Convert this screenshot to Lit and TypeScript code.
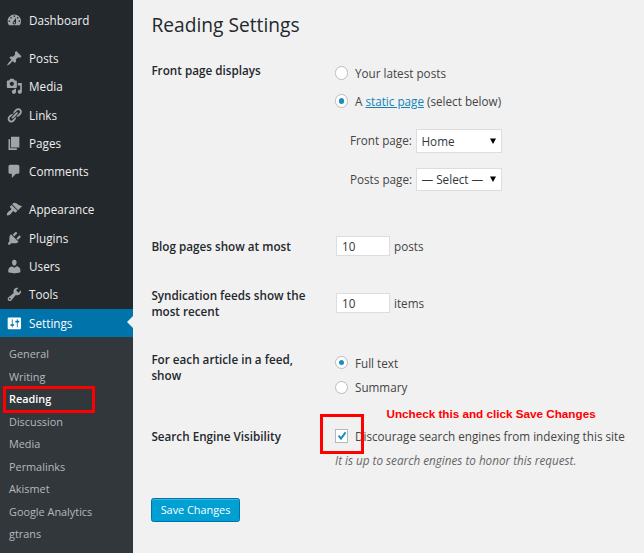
import { LitElement, html, css, svg } from "lit";
import { customElement, property } from "lit/decorators.js";
import { classMap } from "lit/directives/class-map.js";

const ICONS: Record<string, string> = {
  dashboard:
    "M3.76 16h12.48c1.1-1.37 1.76-3.11 1.76-5 0-4.42-3.58-8-8-8s-8 3.58-8 8c0 1.89.66 3.63 1.76 5zM10 4c.55 0 1 .45 1 1s-.45 1-1 1-1-.45-1-1 .45-1 1-1zM6 6c.55 0 1 .45 1 1s-.45 1-1 1-1-.45-1-1 .45-1 1-1zm8 0c.55 0 1 .45 1 1s-.45 1-1 1-1-.45-1-1 .45-1 1-1zm-5.37 5.55L12 7v6c0 1.1-.9 2-2 2s-2-.9-2-2c0-.57.24-1.08.63-1.45zM4 10c.55 0 1 .45 1 1s-.45 1-1 1-1-.45-1-1 .45-1 1-1zm12 0c.55 0 1 .45 1 1s-.45 1-1 1-1-.45-1-1 .45-1 1-1zm-5 3c0-.55-.45-1-1-1s-1 .45-1 1 .45 1 1 1 1-.45 1-1z",
  posts:
    "M10.44 3.02l1.82-1.82 6.36 6.35-1.83 1.82c-1.05-.68-2.48-.57-3.41.36l-.75.75c-.92.93-1.04 2.35-.35 3.41l-1.83 1.82-2.41-2.41-2.8 2.79c-.42.42-3.38 2.71-3.8 2.29s1.86-3.39 2.28-3.81l2.79-2.79L4.1 9.36l1.83-1.82c1.05.69 2.48.57 3.4-.36l.75-.75c.93-.92 1.05-2.35.36-3.41z",
  media:
    "M13 11V4c0-.55-.45-1-1-1h-1.67L9 1H5L3.67 3H2c-.55 0-1 .45-1 1v7c0 .55.45 1 1 1h10c.55 0 1-.45 1-1zM7 4.5c1.38 0 2.5 1.12 2.5 2.5S8.38 9.5 7 9.5 4.5 8.38 4.5 7 5.62 4.5 7 4.5zM14 6h5v10.5c0 1.38-1.12 2.5-2.5 2.5S14 17.88 14 16.5s1.12-2.5 2.5-2.5c.17 0 .34.02.5.05V9h-3V6zm-4 8.05V13h2v3.5c0 1.38-1.12 2.5-2.5 2.5S7 17.88 7 16.5 8.12 14 9.5 14c.17 0 .34.02.5.05z",
  links:
    "M17.74 2.76c1.68 1.69 1.68 4.41 0 6.1l-1.53 1.52c-1.12 1.12-2.7 1.47-4.14 1.09l2.62-2.61.76-.77.76-.76c.84-.84.84-2.2 0-3.04-.84-.85-2.2-.85-3.04 0l-.77.76-3.38 3.38c-.37-1.44-.02-3.02 1.1-4.14l1.52-1.53c1.69-1.68 4.42-1.68 6.1 0zM8.59 13.43l5.34-5.34c.42-.42.42-1.1 0-1.52-.44-.43-1.13-.39-1.53 0l-5.33 5.34c-.42.42-.42 1.1 0 1.52.44.43 1.13.39 1.52 0zm-.76 2.29l4.14-4.15c.38 1.44.03 3.02-1.09 4.14l-1.52 1.53c-1.69 1.68-4.41 1.68-6.1 0-1.68-1.68-1.68-4.42 0-6.1l1.53-1.52c1.12-1.12 2.7-1.47 4.14-1.1l-4.14 4.15c-.85.84-.85 2.2 0 3.05.84.84 2.2.84 3.04 0z",
  pages: "M6 15V2h10v13H6zm-1 1h8v2H3V5h2v11z",
  comments:
    "M5 2h9c1.1 0 2 .9 2 2v7c0 1.1-.9 2-2 2h-2l-5 5v-5H5c-1.1 0-2-.9-2-2V4c0-1.1.9-2 2-2z",
  appearance:
    "M14.48 11.06L7.41 3.99l1.5-1.5c.5-.56 2.3-.47 3.51.32 1.21.8 1.43 1.28 2.91 2.1 1.18.64 2.45 1.26 4.45.85zm-.71.71L6.7 4.7 4.93 6.47c-.39.39-.39 1.02 0 1.41l1.06 1.06c.39.39.39 1.03 0 1.42-.6.6-1.43 1.11-2.21 1.69-.35.26-.7.53-1.01.84C1.43 14.23.4 16.08 1.4 17.07c.99 1 2.84-.03 4.18-1.36.31-.31.58-.66.85-1.02.57-.78 1.08-1.61 1.69-2.21.39-.39 1.02-.39 1.41 0l1.06 1.06c.39.39 1.02.39 1.41 0z",
  plugins:
    "M13.11 4.36L9.87 7.6 8 5.73l3.24-3.24c.35-.34 1.05-.2 1.56.32.52.51.66 1.21.31 1.55zm-8 1.77l.91-1.12 9.01 9.01-1.19.84c-.71.71-2.63 1.16-3.82 1.16H6.14L4.9 17.26c-.59.59-1.54.59-2.12 0-.59-.58-.59-1.53 0-2.12l1.24-1.24v-3.88c0-1.13.4-3.19 1.09-3.89zm7.26 3.97l3.24-3.24c.34-.35 1.04-.21 1.55.31.52.51.66 1.21.31 1.55l-3.24 3.25z",
  users:
    "M10 9.25c-2.27 0-2.73-3.44-2.73-3.44C7 4.02 7.82 2 9.97 2c2.16 0 2.98 2.02 2.71 3.81 0 0-.41 3.44-2.68 3.44zm0 2.57L12.72 10c2.39 0 4.52 2.33 4.52 4.53v2.49s-3.65 1.13-7.24 1.13c-3.65 0-7.24-1.13-7.24-1.13v-2.49c0-2.25 1.94-4.48 4.47-4.48z",
  tools:
    "M16.68 9.77c-1.34 1.34-3.3 1.67-4.95.99l-5.41 6.52c-.99.99-2.59.99-3.58 0s-.99-2.59 0-3.57l6.52-5.42c-.68-1.65-.35-3.61.99-4.95 1.28-1.28 3.12-1.62 4.72-1.06l-2.89 2.89 2.82 2.82 2.86-2.87c.53 1.58.18 3.39-1.08 4.65zM3.81 16.21c.4.39 1.04.39 1.43 0 .4-.4.4-1.04 0-1.43-.39-.4-1.03-.4-1.43 0-.39.39-.39 1.03 0 1.43z",
  settings:
    "M18 16V4c0-.55-.45-1-1-1H3c-.55 0-1 .45-1 1v12c0 .55.45 1 1 1h14c.55 0 1-.45 1-1zM8 11h1c.55 0 1 .45 1 1s-.45 1-1 1H8v1.5c0 .28-.22.5-.5.5s-.5-.22-.5-.5V13H6c-.55 0-1-.45-1-1s.45-1 1-1h1V5.5c0-.28.22-.5.5-.5s.5.22.5.5V11zm5-2h-1c-.55 0-1-.45-1-1s.45-1 1-1h1V5.5c0-.28.22-.5.5-.5s.5.22.5.5V7h1c.55 0 1 .45 1 1s-.45 1-1 1h-1v5.5c0 .28-.22.5-.5.5s-.5-.22-.5-.5V9z",
};

const GROUPS: string[][] = [
  ["Dashboard"],
  ["Posts", "Media", "Links", "Pages", "Comments"],
  ["Appearance", "Plugins", "Users", "Tools", "Settings"],
];

const SUBMENU = [
  "General",
  "Writing",
  "Reading",
  "Discussion",
  "Media",
  "Permalinks",
  "Akismet",
  "Google Analytics",
  "gtrans",
];

@customElement("admin-menu")
export class AdminMenu extends LitElement {
  @property() current = "Settings";
  @property() page = "Reading";

  static styles = css`
    :host {
      display: block;
      background: #23282d;
      color: #eee;
      font-size: 11.7px;
      overflow: hidden;
    }
    .group {
      padding: 6.4px 0 9.3px;
      display: flow-root;
    }
    .group + .group {
      padding: 0 0 9.3px;
    }
    .item {
      position: relative;
      display: flex;
      align-items: center;
      height: 28.4px;
      padding-left: 5.8px;
      gap: 6.6px;
    }
    .name {
      padding-bottom: 0.7px;
    }
    .icon {
      width: 16.7px;
      height: 16.7px;
      fill: #a0a5aa;
      flex: none;
    }
    .current {
      background: #0073aa;
      color: #fff;
    }
    .current .icon {
      fill: #fff;
    }
    .current::after {
      content: "";
      position: absolute;
      right: 0;
      top: 7.4px;
      border: 6.7px solid transparent;
      border-left-width: 0;
      border-right-color: #f1f1f1;
    }
    .submenu {
      background: #32373c;
      margin-top: -9.3px;
      padding: 6px 0 30px 9px;
      font-size: 10.86px;
      color: #b4b9be;
    }
    .sub {
      position: relative;
      height: 22.5px;
      line-height: 22.5px;
    }
    .active {
      color: #fff;
      font-weight: 600;
    }
    .active::after {
      content: "";
      position: absolute;
      left: -6px;
      top: -2px;
      width: 85.5px;
      height: 20.5px;
      border: 3px solid #f00;
    }
  `;

  render() {
    return html`
      ${GROUPS.map(
        (group) => html`<div class="group">
          ${group.map(
            (name) => html`<div
              class=${classMap({ item: true, current: name === this.current })}
            >
              <svg class="icon" viewBox="0 0 20 20">
                ${svg`<path d=${ICONS[name.toLowerCase()]} />`}
              </svg>
              <span class="name">${name}</span>
            </div>`
          )}
        </div>`
      )}
      <div class="submenu">
        ${SUBMENU.map(
          (name) =>
            html`<div class=${classMap({ sub: true, active: name === this.page })}>
              ${name}
            </div>`
        )}
      </div>
    `;
  }
}

@customElement("app-root")
export class AppRoot extends LitElement {
  static styles = css`
    :host {
      display: grid;
      grid-template-columns: 133px 1fr;
      width: 644px;
      height: 553px;
      overflow: hidden;
      background: #f1f1f1;
      color: #444;
      font-family: "Open Sans", sans-serif;
      font-size: 11.7px;
    }
    main {
      padding-left: 18.4px;
      white-space: nowrap;
    }
    h1 {
      margin: 0;
      height: 50px;
      line-height: 49px;
      font-size: 19.2px;
      font-weight: 400;
      color: #23282d;
    }
    .row {
      display: grid;
      grid-template-columns: 183.6px 1fr;
    }
    .front {
      height: 170px;
    }
    .blog {
      height: 57px;
    }
    .feeds {
      height: 62px;
    }
    .article {
      height: 72px;
    }
    .search {
      height: 86.5px;
    }
    .label {
      padding-top: 12px;
      line-height: 16px;
      font-weight: 600;
      color: #23282d;
    }
    .blog .label {
      padding-top: 18px;
    }
    .feeds .label {
      padding-top: 11px;
      line-height: 15.6px;
    }
    .search .label {
      padding-top: 17px;
    }
    .line {
      display: flex;
      align-items: center;
    }
    .front .line {
      height: 28px;
    }
    .front .field {
      padding-top: 9px;
    }
    .front .pick {
      height: 38.5px;
      padding-left: 15px;
    }
    .radios {
      padding-bottom: 6.5px;
    }
    .pick-label {
      width: 66px;
      padding-bottom: 1px;
    }
    .blog .line {
      height: 52px;
    }
    .feeds .line {
      height: 52px;
    }
    .article .line {
      height: 24.5px;
    }
    .article .field {
      padding-top: 11.5px;
    }
    .search .line {
      position: relative;
      height: 50px;
    }
    .radio {
      box-sizing: border-box;
      flex: none;
      width: 13.4px;
      height: 13.4px;
      margin-right: 6.6px;
      border: 1px solid #b9bcbe;
      border-radius: 50%;
      background: #fff;
      display: grid;
      place-items: center;
    }
    .on::before {
      content: "";
      width: 5.4px;
      height: 5.4px;
      border-radius: 50%;
      background: #1e8cbe;
    }
    .check {
      box-sizing: border-box;
      flex: none;
      width: 13.4px;
      height: 13.4px;
      margin-right: 6.6px;
      border: 1px solid #b4b9be;
      background: #fff;
    }
    .tick {
      display: block;
      width: 11.4px;
      height: 11.4px;
      fill: none;
      stroke: #1e8cbe;
      stroke-width: 2;
    }
    a {
      color: #1283b8;
    }
    .box {
      box-sizing: border-box;
      border: 1px solid #ddd;
      background: #fff;
      color: #32373c;
      display: flex;
      align-items: center;
    }
    .number {
      width: 54px;
      height: 20px;
      padding-left: 5px;
      margin: 0 4px 0 1px;
    }
    .select {
      width: 86px;
      height: 23.5px;
      padding: 0 5px 0 4.5px;
      justify-content: space-between;
    }
    .arrow {
      width: 6px;
      height: 6px;
      fill: #000;
    }
    .hint {
      font-style: italic;
      color: #666;
      height: 16px;
      line-height: 16px;
      margin-top: -9px;
    }
    .frame {
      position: absolute;
      left: -15px;
      top: 3px;
      width: 38px;
      height: 34px;
      border: 3px solid #f00;
    }
    .note {
      position: absolute;
      left: 51.5px;
      top: -5px;
      font: 700 11.7px/16px "Liberation Sans", Arial, sans-serif;
      color: #f00;
    }
    button {
      display: block;
      box-sizing: border-box;
      width: 89px;
      height: 24px;
      margin-left: -0.4px;
      padding: 0 0 1px;
      border: 1px solid #0073aa;
      border-radius: 2.5px;
      background: #00a0d2;
      box-shadow: inset 0 1px 0 rgba(120, 200, 230, 0.5);
      color: #fff;
      font: 10.86px "Open Sans", sans-serif;
    }
  `;

  private radio(text: unknown, on = false) {
    return html`<div class="line">
      <span class=${classMap({ radio: true, on })}></span><span>${text}</span>
    </div>`;
  }

  private pick(label: string, value: string) {
    return html`<div class="line pick">
      <span class="pick-label">${label}</span>
      <div class="box select">
        <span>${value}</span>
        <svg class="arrow" viewBox="0 0 6 6"><path d="M0 .5h6L3 6z" /></svg>
      </div>
    </div>`;
  }

  private count(value: number, unit: string) {
    return html`<div class="line">
      <div class="box number">${value}</div>
      <span>${unit}</span>
    </div>`;
  }

  render() {
    return html`
      <admin-menu></admin-menu>
      <main>
        <h1>Reading Settings</h1>
        <div class="row front">
          <div class="label">Front page displays</div>
          <div class="field">
            <div class="radios">
              ${this.radio("Your latest posts")}
              ${this.radio(html`A <a href="#">static page</a> (select below)`, true)}
            </div>
            ${this.pick("Front page:", "Home")}
            ${this.pick("Posts page:", "— Select —")}
          </div>
        </div>
        <div class="row blog">
          <div class="label">Blog pages show at most</div>
          <div class="field">${this.count(10, "posts")}</div>
        </div>
        <div class="row feeds">
          <div class="label">Syndication feeds show the<br />most recent</div>
          <div class="field">${this.count(10, "items")}</div>
        </div>
        <div class="row article">
          <div class="label">For each article in a feed,<br />show</div>
          <div class="field">
            ${this.radio("Full text", true)} ${this.radio("Summary")}
          </div>
        </div>
        <div class="row search">
          <div class="label">Search Engine Visibility</div>
          <div class="field">
            <div class="line">
              <span class="check">
                <svg class="tick" viewBox="0 0 11.4 11.4">
                  <path d="M2.6 5.6L5 8.6L9.6 2.4" />
                </svg>
              </span>
              <span>Discourage search engines from indexing this site</span>
              <span class="frame"></span>
              <span class="note">Uncheck this and click Save Changes</span>
            </div>
            <div class="hint">It is up to search engines to honor this request.</div>
          </div>
        </div>
        <button>Save Changes</button>
      </main>
    `;
  }
}
